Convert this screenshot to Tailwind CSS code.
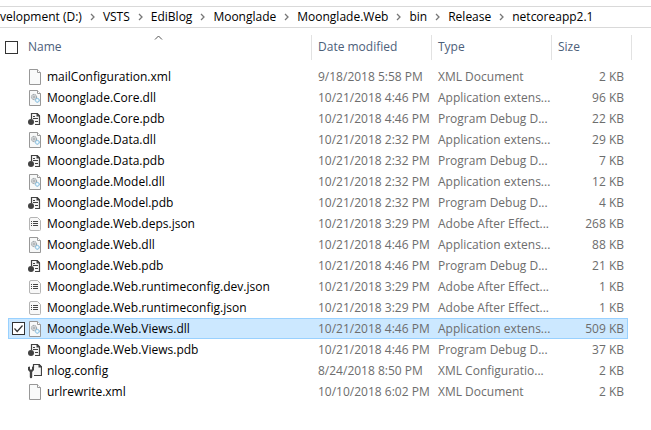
<!DOCTYPE html>
<html lang="en">
  <head>
    <meta charset="UTF-8" />
    <meta name="viewport" content="width=device-width, initial-scale=1.0" />
    <title>netcoreapp2.1</title>
    <script src="https://cdn.jsdelivr.net/npm/@tailwindcss/browser@4"></script>
  </head>
  <body class="bg-white font-['Open_Sans','Noto_Sans',sans-serif] text-[12px] leading-4 text-black overflow-x-hidden">
    <!-- Icons -->
    <svg class="hidden">
      <symbol id="icon-xml" viewBox="0 0 14 16">
        <path d="M1.5.5h8l3 3v12h-11z" fill="#f9fafa" stroke="#989898" />
        <path d="M9.5.5v3h3" fill="#fff" stroke="#989898" />
      </symbol>
      <symbol id="icon-dll" viewBox="0 0 14 16">
        <path d="M1.5.5h8l3 3v12h-11z" fill="#f7f8f8" stroke="#989898" />
        <path d="M9.5.5v3h3" fill="#fff" stroke="#989898" />
        <circle cx="6" cy="7" r="2.6" fill="#eceeef" stroke="#858c91" stroke-dasharray="1.3 .5" />
        <circle cx="6" cy="7" r="1.1" fill="#fff" stroke="#858c91" stroke-width=".8" />
        <circle cx="9.3" cy="10.3" r="2" fill="#d8edf9" stroke="#6fb1d8" stroke-dasharray="1.3 .4" />
        <circle cx="9.3" cy="10.3" r=".7" fill="#fff" />
      </symbol>
      <symbol id="icon-pdb" viewBox="0 0 14 16">
        <path d="M3.5 8V2.5H9L11.5 5v8.500H7" fill="#f6f6f6" stroke="#424242" stroke-width="1.2" />
        <path d="M8.5 2v3.500H12V4.500L9.500 2z" fill="#424242" />
        <path d="M5 5.500h2M5 7.500h5M7 10.500h3" stroke="#424242" />
        <circle cx="3" cy="11" r="3" fill="#424242" />
      </symbol>
      <symbol id="icon-json" viewBox="0 0 14 16">
        <path d="M3 1.5h6.5l3 3v9a1 1 0 0 1-1 1H3a1.5 1.5 0 0 1-1.5-1.5V3A1.5 1.5 0 0 1 3 1.5z" fill="#f8f8f8" stroke="#b4b4b4" />
        <path d="M3 5.5h1M3 7.5h1M3 9.5h1M5 5.5h5M5 7.5h5M5 9.5h5" stroke="#444" />
      </symbol>
      <symbol id="icon-config" viewBox="0 0 14 16">
        <path d="M5.500 5V1.500H11L13.500 4v8.500H6" fill="#f6f6f6" stroke="#424242" stroke-width="1.2" />
        <path d="M10.500 1v3.500H14V3.500L11.500 1z" fill="#424242" />
        <path d="M0 4l2-.5v3h2v-3L6 4v3L4.200 9v5a1.200 1.200 0 0 1-2.400 0V9L0 7z" fill="#424242" />
      </symbol>
    </svg>

    <!-- Address bar -->
    <nav aria-label="Path" class="mt-[6px] h-[22px] border-y border-[#d9d9d9] flex items-center whitespace-nowrap overflow-hidden">
      <ol id="path" class="flex items-center"></ol>
    </nav>

    <!-- File list -->
    <table class="w-full table-fixed border-separate border-spacing-0 text-left text-[#6d6d6d]">
      <colgroup>
        <col class="w-[8px]" />
        <col class="w-[304px]" />
        <col class="w-[120px]" />
        <col class="w-[120px]" />
        <col class="w-[76px]" />
        <col class="w-[4px]" />
        <col />
      </colgroup>
      <thead>
        <tr class="h-[38px] text-[#4c607a]">
          <th colspan="2" class="p-0 font-normal">
            <div class="relative h-[25px] flex items-center gap-[10px] pl-[5px] border-r border-[#e2e2e2]">
              <input type="checkbox" aria-label="Select all" class="appearance-none size-[13px] border border-[#333] bg-white" />
              <button>Name</button>
              <svg class="absolute left-1/2 top-0 -translate-x-[2px] w-[9px] h-[5px]" viewBox="0 0 9 5" fill="none" stroke="#555">
                <path d="M1 4.5l3.5-3.5L8 4.5" />
              </svg>
            </div>
          </th>
          <th class="p-0 font-normal">
            <div class="h-[25px] flex items-center pl-[6px] border-r border-[#e2e2e2]"><button>Date modified</button></div>
          </th>
          <th class="p-0 font-normal">
            <div class="h-[25px] flex items-center pl-[6px] border-r border-[#e2e2e2]"><button>Type</button></div>
          </th>
          <th colspan="2" class="p-0 font-normal">
            <div class="h-[25px] flex items-center pl-[6px] border-r border-[#e2e2e2]"><button>Size</button></div>
          </th>
          <td></td>
        </tr>
      </thead>
      <tbody id="files"></tbody>
    </table>

    <script>
      const path = ["velopment (D:)", "VSTS", "EdiBlog", "Moonglade", "Moonglade.Web", "bin", "Release", "netcoreapp2.1"];

      const files = [
        ["xml", "mailConfiguration.xml", "9/18/2018 5:58 PM", "XML Document", "2 KB"],
        ["dll", "Moonglade.Core.dll", "10/21/2018 4:46 PM", "Application extens...", "96 KB"],
        ["pdb", "Moonglade.Core.pdb", "10/21/2018 4:46 PM", "Program Debug D...", "22 KB"],
        ["dll", "Moonglade.Data.dll", "10/21/2018 2:32 PM", "Application extens...", "29 KB"],
        ["pdb", "Moonglade.Data.pdb", "10/21/2018 2:32 PM", "Program Debug D...", "7 KB"],
        ["dll", "Moonglade.Model.dll", "10/21/2018 2:32 PM", "Application extens...", "12 KB"],
        ["pdb", "Moonglade.Model.pdb", "10/21/2018 2:32 PM", "Program Debug D...", "4 KB"],
        ["json", "Moonglade.Web.deps.json", "10/21/2018 3:29 PM", "Adobe After Effect...", "268 KB"],
        ["dll", "Moonglade.Web.dll", "10/21/2018 4:46 PM", "Application extens...", "88 KB"],
        ["pdb", "Moonglade.Web.pdb", "10/21/2018 4:46 PM", "Program Debug D...", "21 KB"],
        ["json", "Moonglade.Web.runtimeconfig.dev.json", "10/21/2018 3:29 PM", "Adobe After Effect...", "1 KB"],
        ["json", "Moonglade.Web.runtimeconfig.json", "10/21/2018 3:29 PM", "Adobe After Effect...", "1 KB"],
        ["dll", "Moonglade.Web.Views.dll", "10/21/2018 4:46 PM", "Application extens...", "509 KB"],
        ["pdb", "Moonglade.Web.Views.pdb", "10/21/2018 4:46 PM", "Program Debug D...", "37 KB"],
        ["config", "nlog.config", "8/24/2018 8:50 PM", "XML Configuratio...", "2 KB"],
        ["xml", "urlrewrite.xml", "10/10/2018 6:02 PM", "XML Document", "2 KB"],
      ];
      const selected = "Moonglade.Web.Views.dll";

      const chevron = `
        <svg class="w-[21px] h-[8px]" viewBox="0 0 21 8" fill="none" stroke="#777" stroke-width="1.3">
          <path d="M9 1l3 3-3 3" />
        </svg>`;

      document.getElementById("path").innerHTML = path
        .map((name, i) => `<li class="flex items-center">${i ? chevron : ""}<button>${name}</button></li>`)
        .join("");

      document.getElementById("files").innerHTML = files
        .map(([icon, name, date, type, size]) => {
          const on = name === selected;
          const cell = on ? "p-0 border-y border-[#99d1ff] bg-[#cce8ff]" : "p-0 border-y border-transparent";
          return `
            <tr class="h-[21px] whitespace-nowrap">
              <td class="p-0"></td>
              <td class="${cell} border-l">
                <div class="flex items-center pl-[3px] text-black">
                  <span class="relative flex">
                    <input type="checkbox" aria-label="${name}" ${on ? "checked" : ""}
                      class="peer appearance-none size-[13px] border border-[#333] bg-white opacity-0 checked:opacity-100" />
                    <svg class="absolute inset-0 size-[13px] pointer-events-none opacity-0 peer-checked:opacity-100" viewBox="0 0 13 13" fill="none" stroke="#333" stroke-width="1.2">
                      <path d="M2.5 6.5l2.7 3L10.5 3.5" />
                    </svg>
                  </span>
                  <svg class="ml-[3px] mr-[5px] w-[14px] h-[16px]"><use href="#icon-${icon}" /></svg>
                  ${name}
                </div>
              </td>
              <td class="${cell} pl-[6px]">${date}</td>
              <td class="${cell} pl-[6px]">${type}</td>
              <td class="${cell} border-r pr-[3px] text-right">${size}</td>
            </tr>`;
        })
        .join("");
    </script>
  </body>
</html>
